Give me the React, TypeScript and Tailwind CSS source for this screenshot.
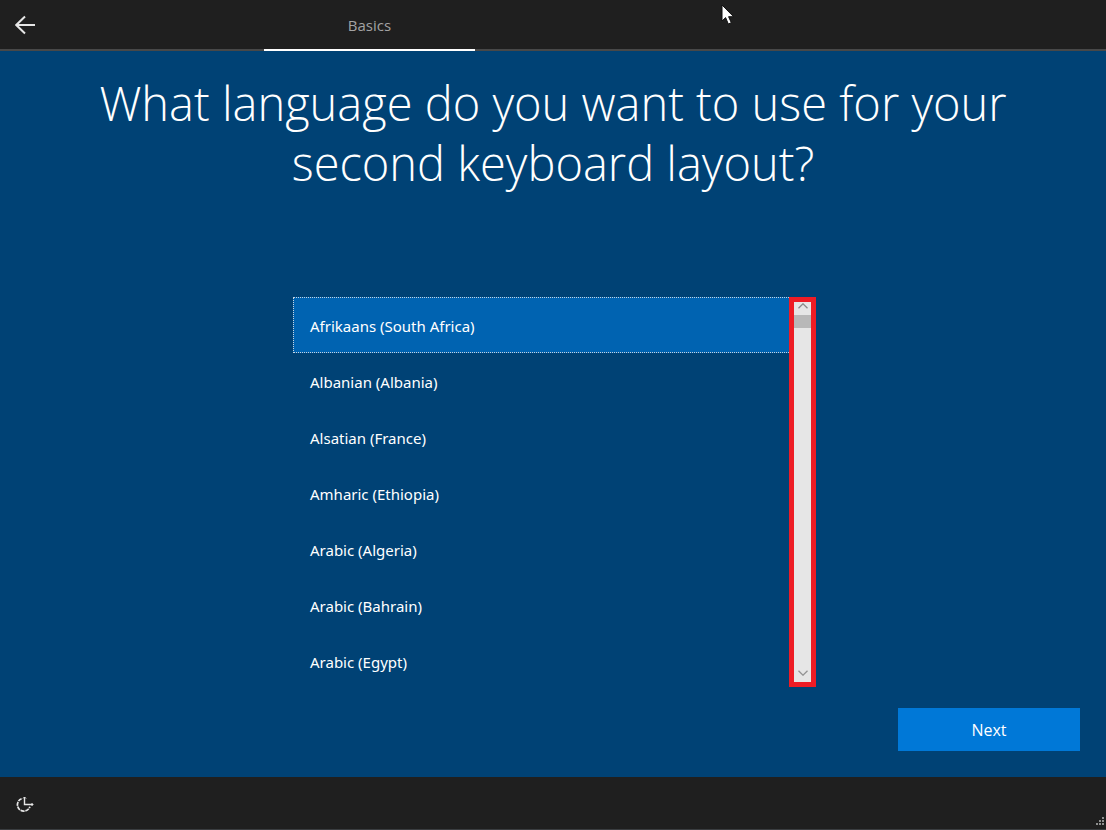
import { useState } from 'react';

const LANGUAGES = [
  'Afrikaans (South Africa)',
  'Albanian (Albania)',
  'Alsatian (France)',
  'Amharic (Ethiopia)',
  'Arabic (Algeria)',
  'Arabic (Bahrain)',
  'Arabic (Egypt)',
];

function TopBar() {
  return (
    <header className="relative flex h-[51px] shrink-0 border-b-2 border-[#484848] bg-[#1f1f1f]">
      <button type="button" aria-label="Back" className="flex w-12 items-center pl-[15px]">
        <svg width="20" height="20" viewBox="0 0 20 20" fill="none" stroke="#e6e6e6" strokeWidth="2">
          <path d="M20 10H1.5M10 1.5 1.3 10l8.7 8.5" />
        </svg>
      </button>
      <nav className="-mb-[2px] ml-[216px] flex w-[211px]">
        <a
          href="#basics"
          aria-current="step"
          className="flex flex-1 items-center justify-center border-b-2 border-white pt-[2px] text-[15px] text-[#a3a3a3]"
        >
          Basics
        </a>
      </nav>

      {/* Mouse pointer */}
      <svg className="absolute top-1 left-[721px]" width="14" height="21" viewBox="0 0 14 21" aria-hidden="true">
        <path d="M1 1v16l3.6-3.4L7.3 20l3-1.3-2.7-6h5z" fill="#fff" stroke="#111" />
      </svg>
    </header>
  );
}

function ScrollRail() {
  return (
    <div className="flex w-[27px] flex-col border-5 border-[#ee1c25] bg-[#e6e6e6]">
      <button type="button" aria-label="Scroll up" className="flex h-[13px] items-start justify-center pt-px">
        <svg width="10" height="6" viewBox="0 0 10 6" fill="none" stroke="#8a8a8a" strokeWidth="1.3">
          <path d="m.5 5.3 4.5-4.5 4.5 4.5" />
        </svg>
      </button>
      <div className="h-[13px] bg-[#b8b8b8]" />
      <div className="flex-1" />
      <button type="button" aria-label="Scroll down" className="flex h-3 items-start justify-center">
        <svg width="10" height="6" viewBox="0 0 10 6" fill="none" stroke="#949494" strokeWidth="1.3">
          <path d="m.5.7 4.5 4.5L9.5.7" />
        </svg>
      </button>
    </div>
  );
}

function LanguageList() {
  const [selected, setSelected] = useState(LANGUAGES[0]);

  return (
    <div className="flex h-[390px] w-[523px] max-w-full">
      <div role="listbox" aria-label="Keyboard language" className="flex-1 overflow-hidden">
        {LANGUAGES.map((language) => (
          <button
            key={language}
            type="button"
            role="option"
            aria-selected={language === selected}
            onClick={() => setSelected(language)}
            className="block h-14 w-full border border-r-0 border-transparent px-4 pt-[2px] text-left font-['Noto_Sans','Open_Sans',sans-serif] text-[15px] text-white aria-selected:border-dotted aria-selected:border-[#c8d4e0] aria-selected:bg-[#0063b1]"
          >
            {language}
          </button>
        ))}
      </div>
      <ScrollRail />
    </div>
  );
}

function BottomBar() {
  return (
    <footer className="flex h-[53px] shrink-0 items-center justify-between border-b border-[#3a3d40] bg-[#1f1f1f] pt-[2px] pl-[15px]">
      <button type="button" aria-label="Ease of Access">
        <svg width="19" height="17" viewBox="0 0 19 17" fill="none" stroke="#e6e6e6">
          <path d="M6.6 2.7a6.4 6.4 0 1 0 8.3 8" strokeWidth="1.7" strokeDasharray="4 .8" />
          <path d="M9.5 1v7.5H18" strokeWidth="1.4" />
          <path d="m8 2.5 1.500-1.500L11 2.500M16.500 7 18 8.500 16.500 10" />
        </svg>
      </button>
      <svg className="self-end" width="12" height="12" viewBox="0 0 12 12" fill="#8f8f8f" aria-hidden="true">
        <path d="M8 0h2v2H8zM5 3h2v2H5zM8 3h2v2H8zM2 6h2v2H2zM5 6h2v2H5zM8 6h2v2H8z" />
      </svg>
    </footer>
  );
}

export default function App() {
  return (
    <div className="flex min-h-screen flex-col bg-[#004275] font-['Open_Sans','Noto_Sans',sans-serif]">
      <TopBar />
      <main className="flex flex-1 flex-col items-center px-[26px] pb-[26px]">
        <h1 className="mt-[22px] max-w-[940px] text-center text-[47px] leading-[60px] font-light text-white">
          What language do you want to use for your second keyboard layout?
        </h1>
        <div className="mt-[104px] pl-[3px]">
          <LanguageList />
        </div>
        <button
          type="button"
          className="mt-[21px] h-[43px] w-[182px] self-end bg-[#0078d7] text-base text-white"
        >
          Next
        </button>
      </main>
      <BottomBar />
    </div>
  );
}
